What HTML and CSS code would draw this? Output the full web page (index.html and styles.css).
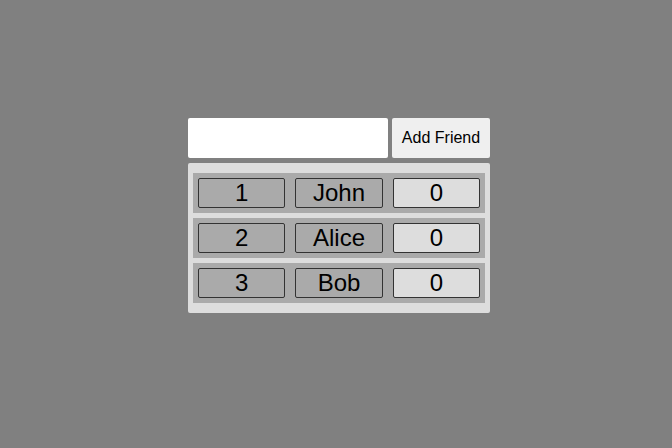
FILE: index.html
```html
<!DOCTYPE html>
<html>
<head>
<meta charset="utf-8">
<link rel="stylesheet" href="styles.css">
</head>
<body>
<div class="app">
  <div class="form">
    <input class="name-input" type="text">
    <button class="add-btn">Add Friend</button>
  </div>
  <div class="list">
    <div class="row"><div class="cell">1</div><div class="cell">John</div><div class="cell score">0</div></div>
    <div class="row"><div class="cell">2</div><div class="cell">Alice</div><div class="cell score">0</div></div>
    <div class="row"><div class="cell">3</div><div class="cell">Bob</div><div class="cell score">0</div></div>
  </div>
</div>
</body>
</html>
```
FILE: styles.css
```css
html, body { margin: 0; padding: 0; }
body {
  background: #808080;
  font-family: "Liberation Sans", Arial, sans-serif;
  width: 672px;
  height: 448px;
  box-sizing: border-box;
  padding: 118px 0 0 188px;
}
.app { width: 302px; }
.form { display: flex; gap: 4px; height: 40px; }
.name-input {
  width: 200px; height: 40px; box-sizing: border-box;
  border: none; border-radius: 2px; background: #fff; margin: 0; padding: 0 6px;
  font-family: inherit; font-size: 16px; outline: none;
}
.add-btn {
  width: 98px; height: 40px; border: none; border-radius: 2px;
  background: #efefef; color: #000; font-family: inherit; font-size: 16px; margin: 0; padding: 0;
}
.list {
  margin-top: 5px;
  background: #dddddd;
  border-radius: 2px;
  padding: 10px 5px;
  display: flex; flex-direction: column; gap: 5px;
}
.row {
  background: #aaaaaa;
  height: 40px; box-sizing: border-box;
  padding: 5px;
  display: flex; gap: 10px;
}
.cell {
  flex: 1; height: 30px; box-sizing: border-box;
  border: 1px solid #333;
  border-radius: 2px;
  background: #aaaaaa;
  display: flex; align-items: center; justify-content: center;
  font-size: 24px; color: #000;
}
.cell.score { background: #dddddd; }
```
